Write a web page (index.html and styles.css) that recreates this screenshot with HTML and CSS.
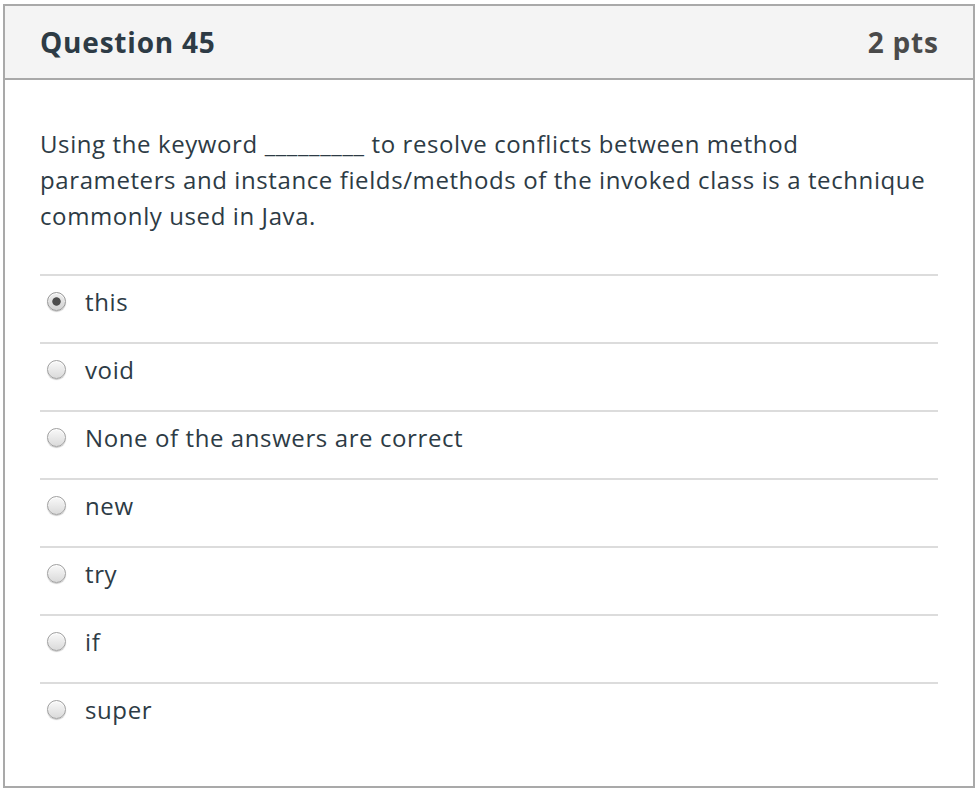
FILE: index.html
```html
<!DOCTYPE html>
<html lang="en">
<head>
<meta charset="utf-8">
<title>Question 45</title>
<link rel="stylesheet" href="styles.css">
</head>
<body>
<div class="page">
  <div class="question">
    <div class="header">
      <h2 class="title">Question 45</h2>
      <span class="points">2 pts</span>
    </div>
    <div class="content">
      <p class="text">Using the keyword _________ to resolve conflicts between method parameters and instance fields/methods of the invoked class is a technique commonly used in Java.</p>
      <div class="answers">
        <label class="answer"><input class="radio" type="radio" name="q45" checked><span>this</span></label>
        <label class="answer"><input class="radio" type="radio" name="q45"><span>void</span></label>
        <label class="answer"><input class="radio" type="radio" name="q45"><span>None of the answers are correct</span></label>
        <label class="answer"><input class="radio" type="radio" name="q45"><span>new</span></label>
        <label class="answer"><input class="radio" type="radio" name="q45"><span>try</span></label>
        <label class="answer"><input class="radio" type="radio" name="q45"><span>if</span></label>
        <label class="answer"><input class="radio" type="radio" name="q45"><span>super</span></label>
      </div>
    </div>
  </div>
</div>
</body>
</html>
```
FILE: styles.css
```css
html, body {
  margin: 0;
  padding: 0;
  background: #ffffff;
}
body {
  font-family: "Open Sans", "Noto Sans", sans-serif;
  color: #2d3b45;
}
.page {
  padding: 4px 5px 0 3px;
}
.question {
  width: 968px;
  border: 2px solid #a9a9a9;
  box-sizing: content-box;
}
.header {
  display: flex;
  justify-content: space-between;
  align-items: baseline;
  background: #f4f4f4;
  border-bottom: 2px solid #a9a9a9;
  padding: 17px 35px 16px 35px;
}
.title {
  margin: 0;
  font-size: 28px;
  line-height: 39px;
  font-weight: 700;
  letter-spacing: 0.8px;
  color: #2d3b45;
}
.points {
  font-size: 28px;
  line-height: 39px;
  font-weight: 700;
  letter-spacing: 0.8px;
  margin-right: -0.8px;
  color: #4a4a4a;
}
.content {
  padding: 46px 35px 36px 35px;
}
.text {
  margin: 0 0 40px 0;
  font-size: 24px;
  line-height: 36px;
  letter-spacing: 0.6px;
}
.answers {
  display: flex;
  flex-direction: column;
}
.answer {
  display: flex;
  align-items: flex-start;
  gap: 19px;
  border-top: 2px solid #dcdcdc;
  padding: 8px 0 22px 7px;
  font-size: 24px;
  line-height: 36px;
  letter-spacing: 0.6px;
}
.radio {
  appearance: none;
  -webkit-appearance: none;
  margin: 8px 0 0 0;
  width: 19px;
  height: 19px;
  flex: none;
  border-radius: 50%;
  border: 1px solid #a0a0a0;
  box-sizing: border-box;
  background: linear-gradient(#f9f9f9, #dadada);
  box-shadow: 0 1px 1px rgba(0, 0, 0, 0.22), inset 0 1px 0 #ffffff;
}
.radio:checked {
  border-color: #989898;
  background: radial-gradient(circle, #4d4d4d 0, #4d4d4d 3.8px, rgba(77, 77, 77, 0) 4.6px), linear-gradient(#efefef, #d2d2d2);
}
```
